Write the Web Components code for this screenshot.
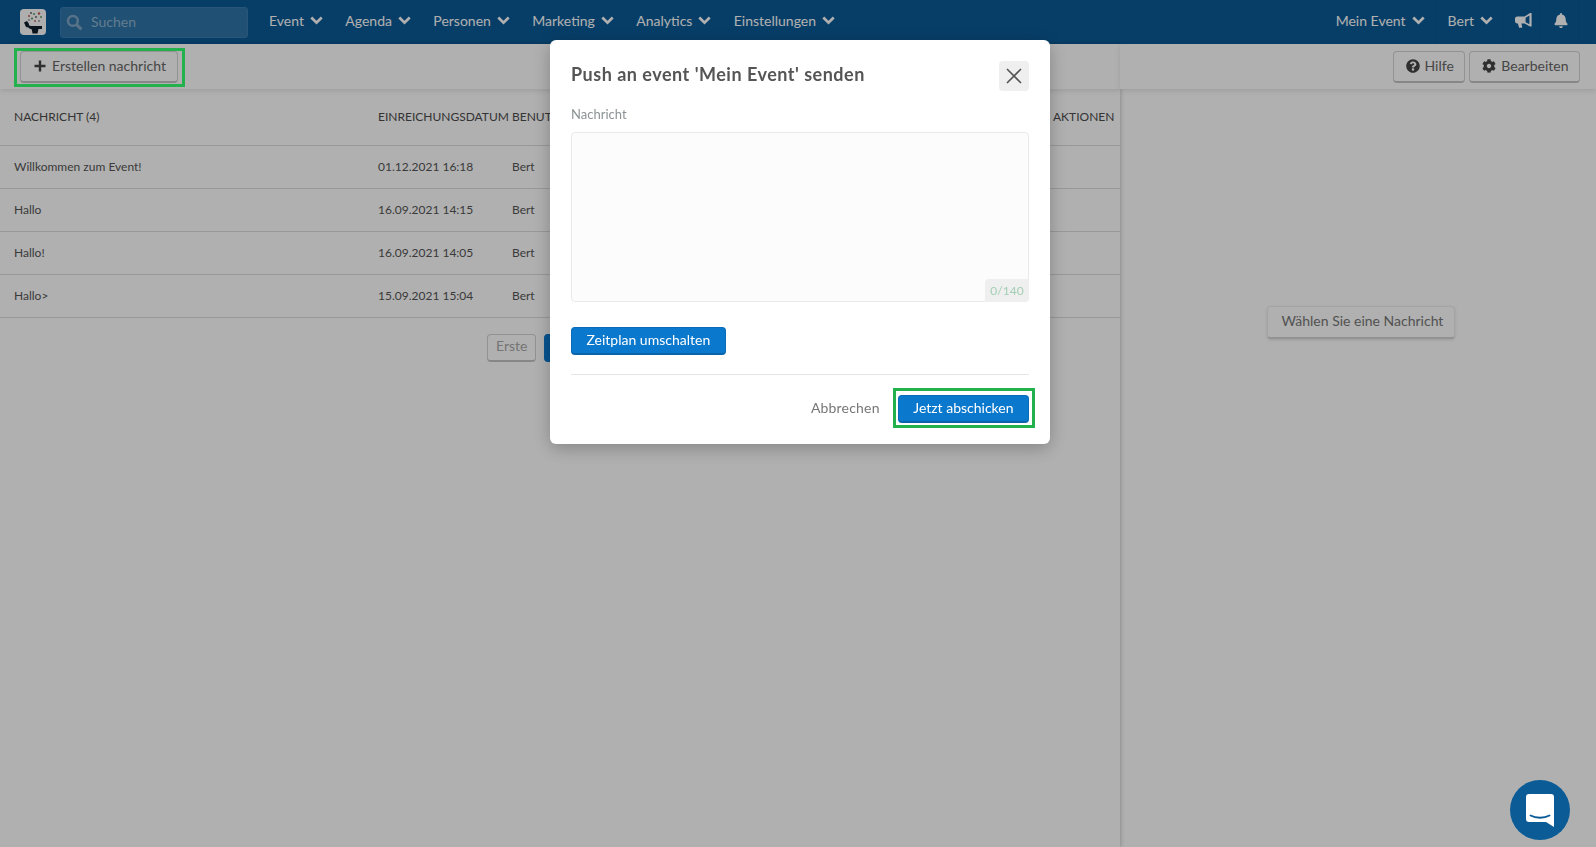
<!DOCTYPE html>
<html lang="de">
<head>
<meta charset="utf-8">
<title>Push</title>
<style>
  html, body { margin: 0; height: 100%; overflow: hidden; }
  body { font-family: Lato, "Open Sans", sans-serif; background: #fff; color: #555; }
</style>
</head>
<body>
<app-navbar></app-navbar>
<app-workspace></app-workspace>
<push-modal></push-modal>
<focus-box></focus-box>
<chat-launcher></chat-launcher>

<script>
const ICONS = {
  chevron: '<svg width="13" height="9" viewBox="0 0 13 9"><path d="M1.3 1.5l5.2 5.2 5.2-5.2" fill="none" stroke="currentColor" stroke-width="2.7"/></svg>',
  question: '<svg width="14" height="14" viewBox="0 0 512 512"><path fill="currentColor" d="M504 256c0 136.997-111.043 248-248 248S8 392.997 8 256C8 119.083 119.043 8 256 8s248 111.083 248 248zM262.655 90c-54.497 0-89.255 22.957-116.549 63.758-3.536 5.286-2.353 12.415 2.715 16.258l34.699 26.31c5.205 3.947 12.621 3.008 16.665-2.122 17.864-22.658 30.113-35.797 57.303-35.797 20.429 0 45.698 13.148 45.698 32.958 0 14.976-12.363 22.667-32.534 33.976C247.128 238.528 216 254.941 216 296v4c0 6.627 5.373 12 12 12h56c6.627 0 12-5.373 12-12v-1.333c0-28.462 83.186-29.647 83.186-106.667 0-58.002-60.165-102-116.531-102zM256 338c-25.365 0-46 20.635-46 46 0 25.364 20.635 46 46 46s46-20.636 46-46c0-25.365-20.635-46-46-46z"/></svg>',
  cog: '<svg width="14" height="14" viewBox="0 0 512 512"><path fill="currentColor" d="M487.4 315.7l-42.6-24.6c4.3-23.2 4.3-47 0-70.2l42.6-24.6c4.9-2.8 7.1-8.6 5.5-14-11.1-35.6-30-67.8-54.7-94.6-3.8-4.1-10-5.1-14.8-2.3L380.8 110c-17.9-15.4-38.5-27.3-60.8-35.1V25.8c0-5.6-3.9-10.5-9.4-11.7-36.7-8.2-74.3-7.8-109.2 0-5.5 1.2-9.4 6.1-9.4 11.7V75c-22.2 7.9-42.8 19.8-60.8 35.1L88.7 85.5c-4.9-2.8-11-1.9-14.8 2.3-24.7 26.7-43.6 58.9-54.7 94.6-1.7 5.4.6 11.2 5.5 14L67.3 221c-4.3 23.2-4.3 47 0 70.2l-42.6 24.6c-4.9 2.8-7.1 8.6-5.5 14 11.1 35.6 30 67.8 54.7 94.6 3.8 4.1 10 5.1 14.8 2.3l42.6-24.6c17.9 15.4 38.5 27.3 60.8 35.1v49.2c0 5.6 3.9 10.5 9.4 11.7 36.7 8.2 74.3 7.8 109.2 0 5.5-1.2 9.4-6.1 9.4-11.7v-49.2c22.2-7.9 42.8-19.8 60.8-35.1l42.6 24.6c4.9 2.8 11 1.9 14.8-2.3 24.7-26.7 43.6-58.9 54.7-94.6 1.5-5.5-.7-11.3-5.6-14.1zM256 336c-44.1 0-80-35.9-80-80s35.9-80 80-80 80 35.9 80 80-35.9 80-80 80z"/></svg>',
  plus: '<svg width="12" height="12" viewBox="0 0 12 12"><path d="M6 0.5v11M0.5 6h11" stroke="currentColor" stroke-width="2.4" fill="none"/></svg>',
  bell: '<svg width="14" height="15" viewBox="0 0 448 512"><path fill="currentColor" d="M224 512c35.32 0 63.97-28.65 63.97-64H160.03c0 35.35 28.65 64 63.97 64zm215.39-149.71c-19.32-20.76-55.47-51.99-55.47-154.29 0-77.7-54.48-139.9-127.94-155.16V32c0-17.67-14.32-32-31.98-32s-31.98 14.33-31.98 32v20.84C118.56 68.1 64.08 130.3 64.08 208c0 102.3-36.15 133.53-55.47 154.29-6 6.45-8.66 14.16-8.61 21.71.11 16.4 12.98 32 32.1 32h383.8c19.12 0 32-15.6 32.1-32 .05-7.55-2.61-15.27-8.61-21.71z"/></svg>',
  horn: '<svg width="17" height="15" viewBox="0 0 17 15"><path fill="currentColor" d="M15 0h1.6v13.4H15L9.6 10.5H6.4l.9 3.6-.5.7H4.1l-1.2-4.3H2.2C1 10.5 0 9.5 0 8.3V5.6C0 4.4 1 3.4 2.2 3.4h7.4zM14.4 2.6L10.6 4.7v4.5l3.8 2.1z"/></svg>'
};

class AppNavbar extends HTMLElement {
  connectedCallback() {
    this.attachShadow({ mode: 'open' });
    const menu = ['Event', 'Agenda', 'Personen', 'Marketing', 'Analytics', 'Einstellungen'];
    this.shadowRoot.innerHTML = `
      <style>
        :host { display: flex; align-items: stretch; height: 44px; background: #0a5a97; color: #fff; font-size: 14px; }
        .logo { width: 26px; height: 26px; margin: 9px 14px 0 20px; flex: none; }
        .search { width: 188px; height: 31px; margin-top: 7px; box-sizing: border-box; flex: none; display: flex; align-items: center; gap: 8px; padding: 0 0 3px 5px;
          background: #2f74a8; border: 1px solid #3a7cae; border-radius: 3px; color: #8fb4d0; font-size: 14px; }
        .search svg { margin-top: 3px; }
        nav { display: flex; padding-left: 21px; }
        .item { display: flex; align-items: center; gap: 6px; padding: 0 22.4px 3px 0; }
        .right { margin-left: auto; display: flex; margin-right: 17px; }
        .right > div { display: flex; align-items: center; justify-content: center; gap: 6px; border-right: 1px solid #09548d; box-sizing: border-box; padding-bottom: 3px; }
        .a { padding: 0 11px; }
        .b { padding: 0 9px 0 11px; }
        .c { width: 38px; padding-left: 3px; }
      </style>
      <svg class="logo" viewBox="0 0 26 26">
        <rect width="26" height="26" rx="4" fill="#fdfdfd"/>
        <g fill="#555"><circle cx="11" cy="4" r=".9"/><circle cx="16" cy="8" r=".9"/><circle cx="9" cy="11" r=".8"/><circle cx="19" cy="12" r=".8"/></g>
        <g fill="#c25a4a"><circle cx="19" cy="4.5" r="1.2"/><circle cx="9" cy="7" r="1"/><circle cx="15" cy="12" r=".9"/></g>
        <g fill="#5d9a68"><circle cx="14" cy="5" r="1"/><circle cx="21" cy="8" r="1"/><circle cx="12" cy="9.5" r="1.1"/></g>
        <path fill="#0d1d2c" d="M4 13.5l3-1.5 2 3-.5 3.5-2.5-.5z"/>
        <path fill="#0d1d2c" d="M8 16l3 1h11v3h-3.5l-1 4.5h-5l-.7-4-3.3-1.5z"/>
      </svg>
      <div class="search">
        <svg width="17" height="17" viewBox="0 0 16 16"><circle cx="6.5" cy="6.5" r="4.6" fill="none" stroke="#7ea6c5" stroke-width="2.4"/><path d="M10 10l4.5 4.5" stroke="#7ea6c5" stroke-width="2.8"/></svg>
        <span>Suchen</span>
      </div>
      <nav>${menu.map(m => `<div class="item"><span>${m}</span>${ICONS.chevron}</div>`).join('')}</nav>
      <div class="right">
        <div class="a"><span>Mein Event</span>${ICONS.chevron}</div>
        <div class="b"><span>Bert</span>${ICONS.chevron}</div>
        <div class="c">${ICONS.horn}</div>
        <div class="c">${ICONS.bell}</div>
      </div>`;
  }
}

class ToolButton extends HTMLElement {
  connectedCallback() {
    this.attachShadow({ mode: 'open' });
    const icon = this.getAttribute('icon');
    const round = icon === 'question' || icon === 'cog';
    this.shadowRoot.innerHTML = `
      <style>
        :host { display: inline-flex; align-items: center; gap: ${round ? 5 : 6}px; box-sizing: border-box; height: 32px; padding: 0 ${round ? 10.5 : 11}px 2px ${round ? 12 : 13}px;
          background: #fff; border: 1px solid #d4d4d4; border-bottom: 2px solid #c4c4c4; border-radius: 4px; color: #666; font-size: 14px; white-space: nowrap; }
        svg { color: #444; display: block; margin-top: 1px; }
      </style>
      ${icon ? ICONS[icon] : ''}<slot></slot>`;
  }
}

class MessageRow extends HTMLElement {
  connectedCallback() {
    this.attachShadow({ mode: 'open' });
    const head = this.hasAttribute('head');
    this.shadowRoot.innerHTML = `
      <style>
        :host { display: grid; grid-template-columns: 364px 134px 1fr 67px; padding: 0 0 1px 14px; align-items: center;
          height: ${head ? 57 : 43}px; box-sizing: border-box; border-bottom: 1px solid #ddd;
          font-size: 12px; color: ${head ? '#4c4c4c' : '#555'}; white-space: nowrap; }
        span { display: block; }
      </style>
      <span>${this.getAttribute('text')}</span>
      <span>${this.getAttribute('date')}</span>
      <span>${this.getAttribute('user')}</span>
      <span>${this.getAttribute('actions') || ''}</span>`;
  }
}

class AppWorkspace extends HTMLElement {
  connectedCallback() {
    this.attachShadow({ mode: 'open' });
    this.shadowRoot.innerHTML = `
      <style>
        :host { display: grid; grid-template-columns: 1120px 1fr; height: 803px; background: #fff; }
        .left { box-shadow: 1px 0 4px rgba(0,0,0,.2); position: relative; overflow: hidden; }
        .bar { height: 45px; box-sizing: border-box; display: flex; align-items: center; gap: 4px; padding: 0 16px 0 20px; background: #fff; box-shadow: 0 2px 5px rgba(0,0,0,.1); position: relative; }
        .bar.end { justify-content: flex-end; }
        .pager { display: flex; justify-content: center; gap: 8px; padding-top: 16px; }
        .pager tool-button { height: 28px; width: 49px; padding: 0 8px 4px; color: #aaa; }
        .pager .on { width: 32px; background: #0a7ad1; border-color: #0a7ad1; }
        .pager .off { visibility: hidden; }
        .right { display: flex; flex-direction: column; }
        .empty { flex: 1; display: flex; justify-content: center; padding-top: 217px; margin-left: 6px; }
        .empty tool-button { height: 33px; padding: 0 11px 4px 14px; color: #777; border-color: #eee; border-bottom-color: #d6d6d6; box-shadow: 0 1px 3px rgba(0,0,0,.12); }
      </style>
      <section class="left">
        <div class="bar"><tool-button icon="plus">Erstellen nachricht</tool-button></div>
        <message-row head text="NACHRICHT (4)" date="EINREICHUNGSDATUM" user="BENUTZER" actions="AKTIONEN"></message-row>
        <message-row text="Willkommen zum Event!" date="01.12.2021 16:18" user="Bert"></message-row>
        <message-row text="Hallo" date="16.09.2021 14:15" user="Bert"></message-row>
        <message-row text="Hallo!" date="16.09.2021 14:05" user="Bert"></message-row>
        <message-row text="Hallo&gt;" date="15.09.2021 15:04" user="Bert"></message-row>
        <div class="pager">
          <tool-button>Erste</tool-button>
          <tool-button class="on"></tool-button>
          <tool-button class="off"></tool-button>
        </div>
      </section>
      <section class="right">
        <div class="bar end">
          <tool-button icon="question">Hilfe</tool-button>
          <tool-button icon="cog">Bearbeiten</tool-button>
        </div>
        <div class="empty"><tool-button>Wählen Sie eine Nachricht</tool-button></div>
      </section>`;
  }
}

class PushModal extends HTMLElement {
  connectedCallback() {
    this.attachShadow({ mode: 'open' });
    this.shadowRoot.innerHTML = `
      <style>
        :host { position: fixed; inset: 0; background: rgba(0,0,0,.31); display: flex; justify-content: center; align-items: flex-start; padding: 40px 0 0 4px; box-sizing: border-box; }
        .dialog { width: 500px; height: 404px; box-sizing: border-box; padding: 21px 21px 0 21px; background: #fff; border-radius: 6px; box-shadow: 0 4px 18px rgba(0,0,0,.25); display: flex; flex-direction: column; }
        header { display: flex; justify-content: space-between; align-items: center; height: 30px; }
        h2 { margin: 0 0 4px; font-size: 18px; font-weight: 700; letter-spacing: .5px; color: #555; }
        .close { width: 30px; height: 30px; border-radius: 4px; background: #efefef; display: flex; align-items: center; justify-content: center; }
        label { margin-top: 14px; font-size: 13px; color: #8b9394; line-height: 18px; display: block; height: 19px; }
        .area { position: relative; margin-top: 8px; height: 170px; box-sizing: border-box; border: 1px solid #eaeaea; border-radius: 4px; background: #fcfcfc; }
        .count { position: absolute; right: -1px; bottom: -1px; width: 44px; height: 23px; background: #efefef; border-radius: 4px 0 4px 0; color: #a3cfb4; font-size: 12px; line-height: 24px; text-align: center; }
        .btn { display: inline-flex; align-items: center; height: 28px; box-sizing: border-box; padding: 0 14.5px 2px; background: #0a78cc; color: #fff; border-radius: 4px; border: 1px solid #0a6cb8; border-bottom: 2px solid #0a64aa; font-size: 14px; white-space: nowrap; }
        .row { margin-top: 25px; }
        hr { margin: 19px 0 0; border: 0; border-top: 1px solid #e4e4e4; width: 100%; }
        footer { display: flex; justify-content: flex-end; align-items: center; gap: 18px; margin-top: 20px; }
        .cancel { font-size: 14px; color: #777; letter-spacing: .2px; padding-bottom: 3px; }
        .wrap { position: relative; display: flex; }
        .wrap::after { content: ""; position: absolute; left: -5px; right: -6px; top: -7px; bottom: -5px; border: 3px solid #22b14c; }
      </style>
      <div class="dialog">
        <header>
          <h2>Push an event 'Mein Event' senden</h2>
          <div class="close"><svg width="16" height="16" viewBox="0 0 16 16"><path d="M1 1l14 14M15 1L1 15" stroke="#555" stroke-width="1.6" fill="none"/></svg></div>
        </header>
        <label>Nachricht</label>
        <div class="area"><div class="count">0/140</div></div>
        <div class="row"><span class="btn">Zeitplan umschalten</span></div>
        <hr>
        <footer>
          <span class="cancel">Abbrechen</span>
          <span class="wrap"><span class="btn">Jetzt abschicken</span></span>
        </footer>
      </div>`;
  }
}

class FocusBox extends HTMLElement {
  connectedCallback() {
    this.attachShadow({ mode: 'open' });
    this.shadowRoot.innerHTML = `
      <style>
        :host { position: fixed; left: 14px; top: 48px; width: 171px; height: 39px; box-sizing: border-box; border: 3px solid #22b14c; }
      </style>`;
  }
}

class ChatLauncher extends HTMLElement {
  connectedCallback() {
    this.attachShadow({ mode: 'open' });
    this.shadowRoot.innerHTML = `
      <style>
        :host { position: fixed; left: 1510px; top: 780px; width: 60px; height: 60px; border-radius: 50%; background: #0b5b97; display: flex; align-items: center; justify-content: center; }
      </style>
      <svg width="28" height="33" viewBox="0 0 28 33">
        <path fill="#fff" d="M3 0h22a3 3 0 0 1 3 3v30l-8-5H3a3 3 0 0 1-3-3V3a3 3 0 0 1 3-3z"/>
        <path d="M4.5 21.5c5.5 3 13.5 3 19 0" fill="none" stroke="#0b5b97" stroke-width="1.8" stroke-linecap="round"/>
      </svg>`;
  }
}

customElements.define('tool-button', ToolButton);
customElements.define('message-row', MessageRow);
customElements.define('app-navbar', AppNavbar);
customElements.define('app-workspace', AppWorkspace);
customElements.define('push-modal', PushModal);
customElements.define('focus-box', FocusBox);
customElements.define('chat-launcher', ChatLauncher);
</script>
</body>
</html>
